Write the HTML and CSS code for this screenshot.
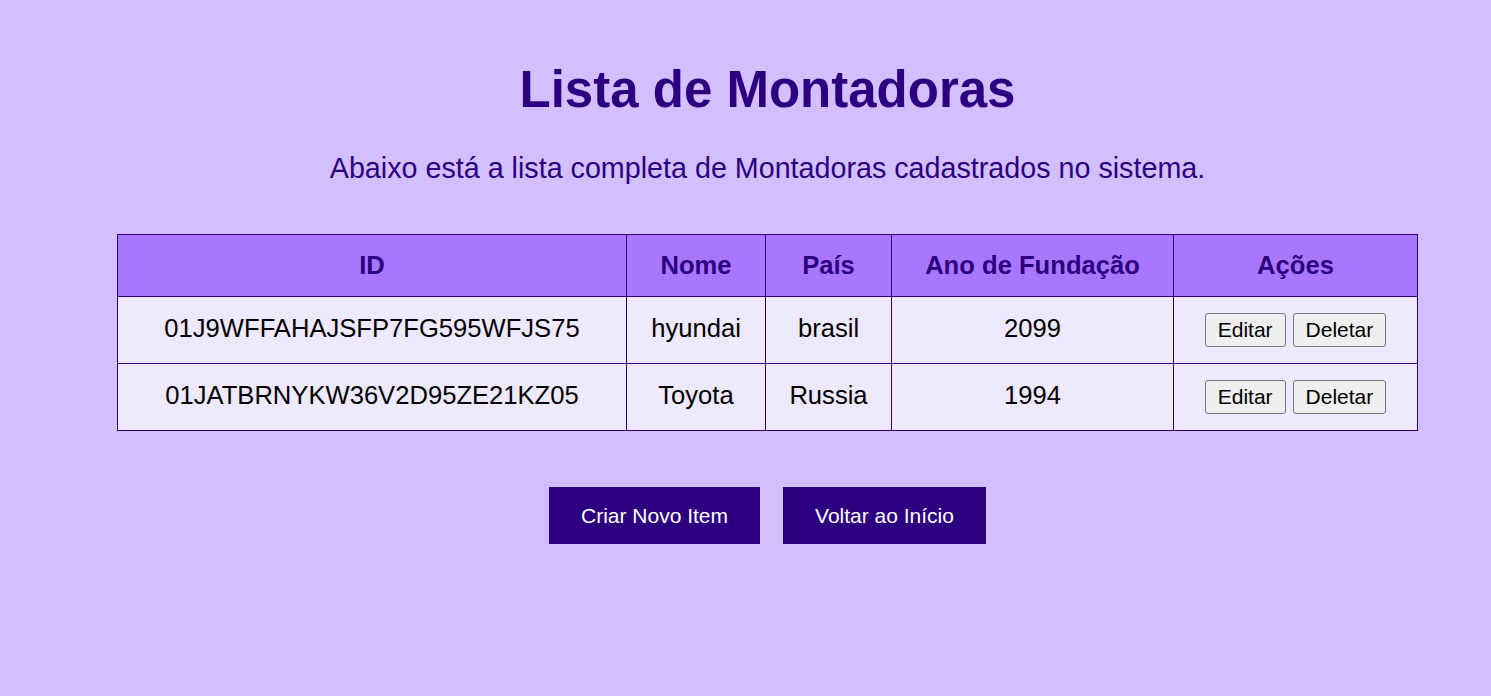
FILE: index.html
```html
<!DOCTYPE html>
<html lang="pt">
<head>
<meta charset="utf-8">
<title>Lista de Montadoras</title>
<link rel="stylesheet" href="styles.css">
</head>
<body>
<main class="page">
  <h1 class="title">Lista de Montadoras</h1>
  <p class="subtitle">Abaixo está a lista completa de Montadoras cadastrados no sistema.</p>
  <table class="list">
    <colgroup>
      <col class="c-id"><col class="c-nome"><col class="c-pais"><col class="c-ano"><col class="c-acoes">
    </colgroup>
    <thead>
      <tr><th>ID</th><th>Nome</th><th>País</th><th>Ano de Fundação</th><th>Ações</th></tr>
    </thead>
    <tbody>
      <tr>
        <td>01J9WFFAHAJSFP7FG595WFJS75</td><td>hyundai</td><td>brasil</td><td>2099</td>
        <td class="cell-actions"><div class="actions"><button class="btn-sm">Editar</button><button class="btn-sm">Deletar</button></div></td>
      </tr>
      <tr>
        <td>01JATBRNYKW36V2D95ZE21KZ05</td><td>Toyota</td><td>Russia</td><td>1994</td>
        <td class="cell-actions"><div class="actions"><button class="btn-sm">Editar</button><button class="btn-sm">Deletar</button></div></td>
      </tr>
    </tbody>
  </table>
  <div class="bottom">
    <button class="btn-main">Criar Novo Item</button>
    <button class="btn-main">Voltar ao Início</button>
  </div>
</main>
</body>
</html>
```
FILE: styles.css
```css
html, body {
  margin: 0;
  padding: 0;
  background: #d3bfff;
  font-family: "Liberation Sans", Arial, sans-serif;
  color: #2d0080;
}
.page {
  padding: 59px 0 40px 44px;
  width: 1491px;
  box-sizing: border-box;
  display: flex;
  flex-direction: column;
  align-items: center;
}
.title {
  margin: 0;
  font-size: 51px;
  font-weight: bold;
  line-height: 62px;
}
.subtitle {
  margin: 30px 0 0;
  font-size: 28.7px;
  line-height: 34px;
}
.list {
  margin-top: 49px;
  width: 1301px;
  border-collapse: collapse;
  table-layout: fixed;
}
.c-id { width: 509px; }
.c-nome { width: 139px; }
.c-pais { width: 126px; }
.c-ano { width: 282px; }
.c-acoes { width: 244px; }
.list th, .list td {
  border: 1px solid #2d0080;
  text-align: center;
  font-size: 25.6px;
  padding: 0;
}
.list th {
  background: #a977ff;
  height: 61px;
  font-weight: bold;
  color: #2d0080;
}
.list td {
  background: #efe9ff;
  color: #000;
  height: 62px;
  padding-bottom: 4px;
}
.list td.cell-actions {
  padding-bottom: 0;
}
.actions {
  display: flex;
  justify-content: center;
  gap: 7px;
}
.btn-sm {
  font-family: "Liberation Sans", Arial, sans-serif;
  font-size: 21px;
  height: 34px;
  padding: 0 12px;
  background: #efefef;
  border: 1px solid #767676;
  border-radius: 3px;
  color: #000;
}
.bottom {
  margin-top: 56px;
  display: flex;
  gap: 23px;
}
.btn-main {
  font-family: "Liberation Sans", Arial, sans-serif;
  font-size: 21px;
  height: 57px;
  padding: 0 32px;
  background: #2d0080;
  color: #fff;
  border: none;
}
```
